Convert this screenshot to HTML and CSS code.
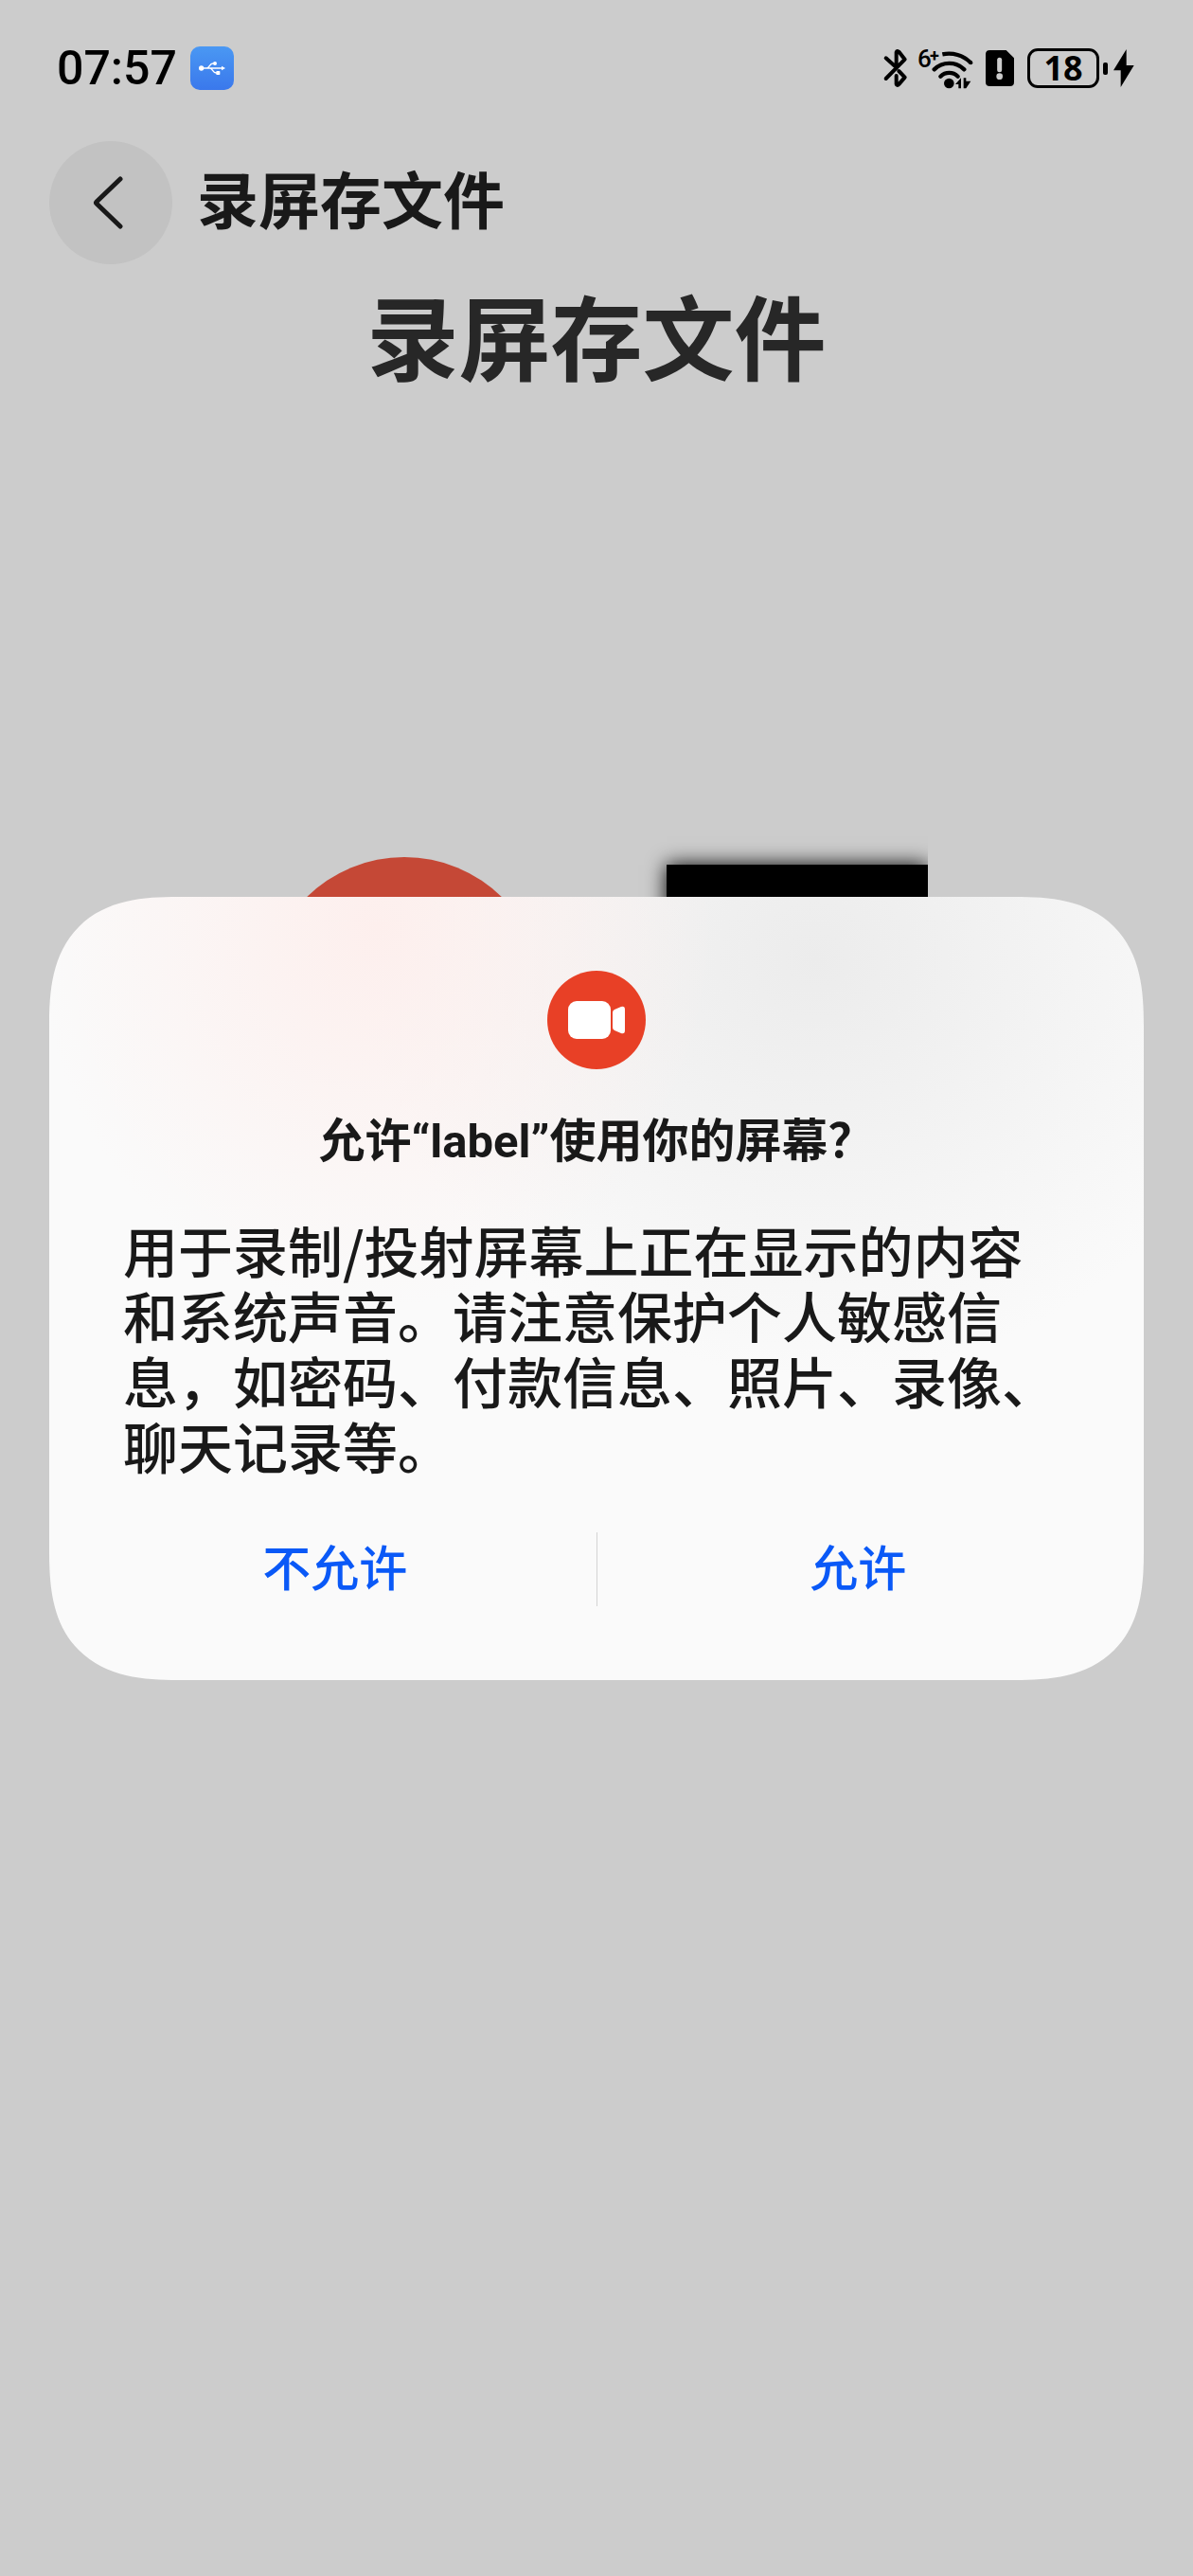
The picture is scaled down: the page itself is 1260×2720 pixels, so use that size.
FILE: index.html
```html
<!DOCTYPE html>
<html lang="zh-CN">
<head>
<meta charset="utf-8">
<meta name="viewport" content="width=device-width, initial-scale=1">
<title>录屏存文件</title>
<link rel="stylesheet" href="styles.css">
</head>
<body>
<div class="status-bar">
  <div class="status-left">
    <time class="clock">07:57</time>
    <span class="usb-badge">
      <svg width="46" height="46" viewBox="0 0 138 138" aria-hidden="true">
        <g fill="none" stroke="#fff" stroke-width="4">
          <path d="M34 69H104M52 69C62 68 60 54 72 54H78M62 69C72 70 70 84 82 84H88"/>
        </g>
        <g fill="#fff"><circle cx="35" cy="69" r="8"/><circle cx="78" cy="54" r="6"/><rect x="82" y="78" width="12" height="12" rx="2"/><path d="M99 62L111 69L99 76Z"/></g>
      </svg>
    </span>
  </div>
  <div class="status-right">
    <svg width="28" height="44" viewBox="70 60 84 132" aria-hidden="true">
      <path d="M81 94L114 124M81 159L141 98L123 75Q116 68 114 76V118M122 135L141 155L123 176Q116 184 114 176V150" fill="none" stroke="#000" stroke-width="12" stroke-linecap="round" stroke-linejoin="round"/>
    </svg>
    <svg class="wifi" width="57" height="44" viewBox="0 0 57 44" aria-hidden="true">
      <text class="wifi-gen" x="-3" y="21">6<tspan class="wifi-plus" x="10" y="15">+</tspan></text>
      <g transform="scale(.3333) translate(-185 -55)">
        <g fill="none" stroke="#000" stroke-width="13">
          <path d="M255 77A97 97 0 0 1 345 104" />
          <path d="M229 125A68 68 0 0 1 324 125" stroke-linecap="round"/>
          <path d="M249 147A39 39 0 0 1 304 147" stroke-linecap="round"/>
        </g>
        <circle cx="345" cy="104" r="6"/><circle cx="276" cy="169" r="16"/>
        <path d="M296 172L314 152V185H306V172ZM322 152H330V162H345L330 185H322Z"/>
      </g>
    </svg>
    <svg width="30" height="38" viewBox="0 0 90 114" aria-hidden="true">
      <path d="M13 0H65L90 25V101Q90 114 77 114H13Q0 114 0 101V13Q0 0 13 0Z"/>
      <path d="M44 31V62" stroke="#ccc" stroke-width="15" stroke-linecap="round"/><circle cx="44" cy="83" r="10" fill="#ccc"/>
    </svg>
    <div class="battery">
      <span class="battery-level">18</span>
      <span class="battery-tip"></span>
      <svg width="22" height="40" viewBox="0 0 66 120" aria-hidden="true"><path d="M41 0L0 67H23V120L65 51H41Z"/></svg>
    </div>
  </div>
</div>

<header class="nav">
  <button class="back" type="button" aria-label="返回">
    <svg width="32" height="56" viewBox="0 0 32 56" fill="none" stroke="#191919" stroke-width="5" stroke-linecap="round" stroke-linejoin="round" aria-hidden="true"><path d="M29 3L4 27Q3 28 4 29L29 53"/></svg>
  </button>
  <h1 class="nav-title">录屏存文件</h1>
</header>

<main class="content">
  <h2 class="heading">录屏存文件</h2>
  <div class="stage">
    <div class="record"></div>
    <div class="preview"></div>
  </div>
</main>

<div class="overlay">
  <section class="dialog" role="dialog" aria-modal="true" aria-labelledby="dialog-title" aria-describedby="dialog-text">
    <svg class="dialog-icon" width="104" height="104" viewBox="0 0 104 104" aria-hidden="true">
      <circle cx="52" cy="52" r="52" fill="#e84026"/>
      <rect x="22" y="32" width="45" height="40" rx="9" fill="#fff"/>
      <path d="M69 44Q69 42 71 41L78 38Q82 37 82 41V63Q82 67 78 66L71 63Q69 62 69 60Z" fill="#fff"/>
    </svg>
    <h2 class="dialog-title" id="dialog-title">允许“label”使用你的屏幕？</h2>
    <p class="dialog-text" id="dialog-text">用于录制/投射屏幕上正在显示的内容和系统声音。请注意保护个人敏感信息，如密码、付款信息、照片、录像、聊天记录等。</p>
    <div class="actions">
      <button class="action" type="button">不允许</button>
      <span class="divider"></span>
      <button class="action" type="button">允许</button>
    </div>
  </section>
</div>
</body>
</html>
```
FILE: styles.css
```css
* {
  box-sizing: border-box;
}

body {
  margin: 0;
  min-height: 100vh;
  background: #ccc;
  color: #191919;
  font-family: "Noto Sans CJK SC", sans-serif;
}

h1, h2, p {
  margin: 0;
}

button {
  border: 0;
  padding: 0;
  font: inherit;
  cursor: pointer;
}

svg {
  display: block;
}

/* Status bar */
.status-bar {
  display: flex;
  justify-content: space-between;
  align-items: center;
  height: 144px;
  padding: 0 62px 0 60px;
  color: #000;
}

.status-left {
  display: flex;
  align-items: center;
  gap: 14px;
}

.clock {
  font: 500 50px/60px Roboto, sans-serif;
}

.usb-badge {
  border-radius: 10px;
  background: linear-gradient(#4a98f3, #3a78ec);
}

.status-right {
  display: flex;
  align-items: center;
  gap: 12px;
}

.wifi {
  overflow: visible;
}

.wifi-gen {
  font: 500 26px Roboto, sans-serif;
}

.wifi-plus {
  font-size: 18px;
  font-weight: 700;
}

.battery {
  display: flex;
  align-items: center;
  gap: 4px;
  margin-left: 2px;
}

.battery-level {
  width: 76px;
  height: 42px;
  border: 3px solid #000;
  border-radius: 11px;
  font: 700 36px/36px "Noto Sans", sans-serif;
  text-align: center;
}

.battery-tip {
  width: 5px;
  height: 13px;
  margin-right: 2px;
  border-radius: 2px;
  background: #000;
}

/* Title bar */
.nav {
  display: flex;
  align-items: center;
  gap: 26px;
  padding: 5px 52px 0;
}

.back {
  display: grid;
  place-items: center;
  width: 130px;
  height: 130px;
  padding-right: 6px;
  border-radius: 50%;
  background: #c2c2c2;
}

.nav-title {
  padding-bottom: 12px;
  font-size: 65px;
  line-height: 96px;
  font-weight: 700;
}

/* Page content */
.content {
  display: flex;
  flex-direction: column;
  align-items: center;
}

.heading {
  color: #272727;
  font-size: 97px;
  line-height: 146px;
  font-weight: 700;
}

.stage {
  display: flex;
  justify-content: space-between;
  align-items: center;
  width: 700px;
  margin-top: 440px;
  padding: 40px 0;
  overflow: hidden;
}

.record {
  width: 294px;
  height: 294px;
  border-radius: 50%;
  background: #c54836;
}

.preview {
  width: 276px;
  height: 278px;
  background: #000;
  box-shadow: 0 0 20px #000;
}

/* Permission dialog */
.overlay {
  position: fixed;
  inset: 0;
  display: grid;
  align-items: center;
  padding: 0 52px;
}

.dialog {
  display: flex;
  flex-direction: column;
  align-items: center;
  padding: 78px 26px;
  border-radius: 108px;
  background:
    radial-gradient(360px 400px at 30% 4%, #fdefed, #fdefed00),
    radial-gradient(480px 440px at 70% 8%, #ececec, #ececec00),
    #fafafa;
}

@supports (corner-shape: superellipse(1.4)) {
  .dialog {
    border-radius: 136px;
    corner-shape: superellipse(1.4);
  }
}

.dialog-title {
  margin-top: 44px;
  font-family: Roboto, "Noto Sans CJK SC", sans-serif;
  font-size: 49px;
  line-height: 66px;
  font-weight: 700;
}

.dialog-text {
  padding: 0 52px;
  margin-top: 46px;
  font-size: 58px;
  line-height: 69px;
  font-weight: 500;
}

.actions {
  display: flex;
  align-items: center;
  align-self: stretch;
  margin-top: 57px;
}

.action {
  flex: 1;
  height: 78px;
  padding-bottom: 8px;
  background: none;
  color: #0a59f7;
  font-size: 51px;
  line-height: 70px;
  font-weight: 500;
}

.divider {
  width: 1px;
  height: 78px;
  background: #d4d4d4;
}
```
